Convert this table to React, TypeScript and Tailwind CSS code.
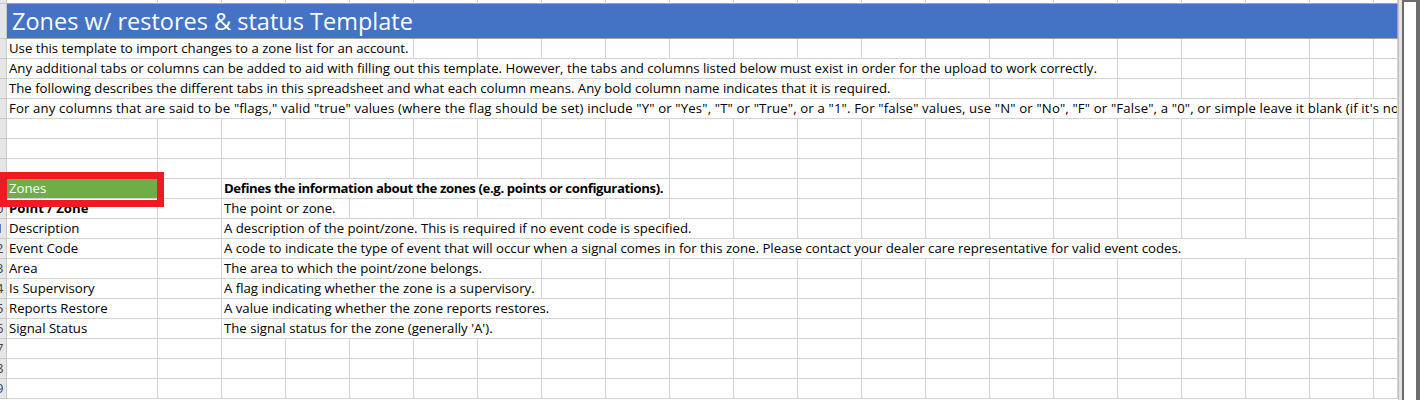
import React from 'react'

const COLS = 21

// full class names so tailwind picks them up
const SPAN: Record<number, string> = {
  1: 'col-span-1',
  2: 'col-span-2',
  5: 'col-span-5',
  6: 'col-span-6',
  7: 'col-span-7',
  8: 'col-span-8',
  13: 'col-span-13',
  16: 'col-span-16',
  17: 'col-span-17',
  21: 'col-span-21',
}

type Cell = { span?: number; text?: string; bold?: boolean; cls?: string }

const gridCols = 'grid grid-cols-[7px_151px_repeat(19,64px)_24px]'

// the row header is scrolled mostly out of view, only its right edge shows
const RowHead = ({ num }: { num?: string }) => (
  <div className="flex justify-end overflow-hidden whitespace-nowrap border-r border-b border-[#c8c8c8] bg-[#e6e6e6]">
    <div className="w-[20px] shrink-0 text-center text-[13px] leading-[19px] text-[#444]">{num}</div>
  </div>
)

const Row = ({ num, cells = [] }: { num?: string; cells?: Cell[] }) => {
  const used = cells.reduce((s, c) => s + (c.span ?? 1), 0)
  return (
    <div className={`${gridCols} h-[20px] shrink-0`}>
      <RowHead num={num} />
      {cells.map((c, i) => (
        <div
          key={i}
          className={`${SPAN[c.span ?? 1]} overflow-hidden whitespace-nowrap border-r border-b border-[#d4d4d4] pl-[2px] text-[13.2px] leading-[19px] text-black ${c.bold ? 'font-bold' : ''} ${c.cls ?? ''}`}
        >
          {c.text}
        </div>
      ))}
      {Array.from({ length: COLS - used }).map((_, i) => (
        <div key={'e' + i} className="border-r border-b border-[#d4d4d4]" />
      ))}
    </div>
  )
}

const intro: [string, number, string, string?][] = [
  ['2', 5, 'Use this template to import changes to a zone list for an account.'],
  ['3', 16, 'Any additional tabs or columns can be added to aid with filling out this template. However, the tabs and columns listed below must exist in order for the upload to work correctly.'],
  ['4', 13, 'The following describes the different tabs in this spreadsheet and what each column means. Any bold column name indicates that it is required.'],
  ['5', 21, 'For any columns that are said to be "flags," valid "true" values (where the flag should be set) include "Y" or "Yes", "T" or "True", or a "1". For "false" values, use "N" or "No", "F" or "False", a "0", or simple leave it blank (if it\'s not required).', 'tracking-[0.14px]'],
]

const fields: [string, string, number, boolean?][] = [
  ['Point / Zone', 'The point or zone.', 2, true],
  ['Description', 'A description of the point/zone. This is required if no event code is specified.', 8],
  ['Event Code', 'A code to indicate the type of event that will occur when a signal comes in for this zone. Please contact your dealer care representative for valid event codes.', 17],
  ['Area', 'The area to which the point/zone belongs.', 5],
  ['Is Supervisory', 'A flag indicating whether the zone is a supervisory.', 5],
  ['Reports Restore', 'A value indicating whether the zone reports restores.', 6],
  ['Signal Status', "The signal status for the zone (generally 'A').", 5],
]

export default function App() {
  return (
    <div className="flex h-[400px] w-[1420px] overflow-hidden bg-white font-['Open_Sans',sans-serif]">
      <div className="relative flex w-[1398px] shrink-0 flex-col overflow-hidden">
        {/* partial row above the title */}
        <div className={`${gridCols} h-[4px] shrink-0`}>
          <div className="border-r border-b border-[#c8c8c8] bg-[#e6e6e6]" />
          {Array.from({ length: COLS }).map((_, i) => (
            <div key={i} className="border-r border-b border-r-[#d4d4d4] border-b-[#a3a3a3]" />
          ))}
        </div>

        {/* title */}
        <div className={`${gridCols} h-[35px] shrink-0`}>
          <RowHead num="1" />
          <div className="col-span-21 overflow-hidden whitespace-nowrap border-r border-b border-[#a3a3a3] bg-[#4472c4] pl-[5px] text-[23.5px] leading-[34px] text-white">
            Zones w/ restores &amp; status Template
          </div>
        </div>

        {intro.map(([n, span, text, cls]) => (
          <Row key={n} num={n} cells={[{ span, text, cls }]} />
        ))}

        <Row num="6" />
        <Row num="7" />
        <Row num="8" />

        <Row
          num="9"
          cells={[
            { text: 'Zones', cls: 'bg-[#70ad47] !text-white' },
            {},
            {
              span: 7,
              bold: true,
              cls: 'tracking-[-0.4px]',
              text: 'Defines the information about the zones (e.g. points or configurations).',
            },
          ]}
        />

        {fields.map(([name, desc, span, bold], i) => (
          <Row
            key={name}
            num={String(10 + i)}
            cells={[{ text: name, bold }, {}, { span, text: desc }]}
          />
        ))}

        <Row num="17" />
        <Row num="18" />
        <Row num="19" />

        {/* red highlight box drawn over the sheet */}
        <div className="pointer-events-none absolute left-0 top-[172px] h-[35px] w-[164px] border-[7px] border-[#ed1c24]" />
      </div>

      {/* window edge on the right */}
      <div className="flex w-[22px] shrink-0">
        <div className="w-[4px] border-l border-[#c2c2c2] bg-[#e3e3e3]" />
        <div className="flex-1 border-t-2 border-l-2 border-r-4 border-[#6d6d6d] bg-white" />
      </div>
    </div>
  )
}
